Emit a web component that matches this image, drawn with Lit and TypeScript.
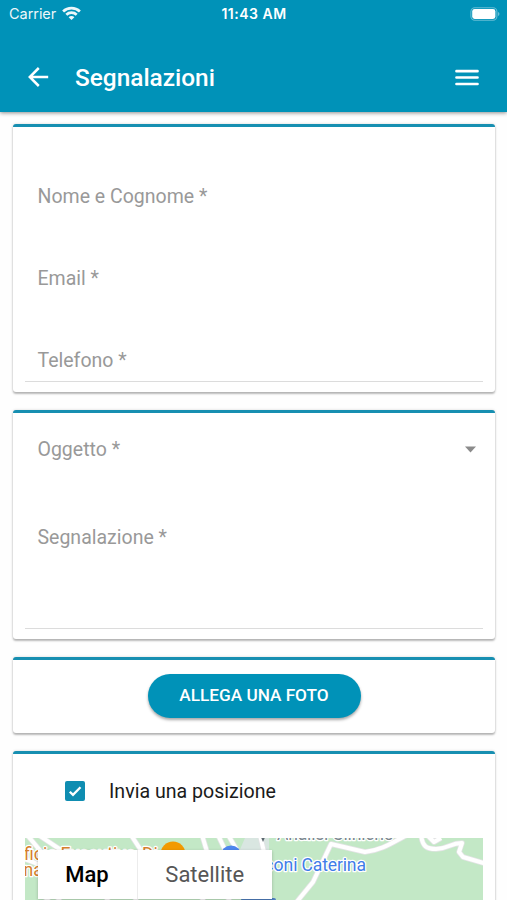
import { LitElement, html, css, svg } from "lit";
import { customElement } from "lit/decorators.js";

@customElement("status-bar")
class StatusBar extends LitElement {
  static styles = css`
    :host { display: grid; grid-template-columns: 1fr auto 1fr; align-items: center; height: 28px; padding: 0 7px 0 9px; color: #fff; font: 14.5px/28px Inter, sans-serif; }
    .carrier { display: flex; align-items: center; gap: 6px; opacity: 0.93; letter-spacing: -0.05px; }
    .carrier svg { position: relative; top: -1px; }
    .time { font-size: 14px; font-weight: 600; letter-spacing: 0.5px; padding-right: 1px; }
    .battery { justify-self: end; display: block; position: relative; top: -0.5px; }
  `;
  render() {
    return html`
      <div class="carrier">
        <span>Carrier</span>
        <svg width="19" height="15" viewBox="0 0 19 15" fill="none" stroke="#fff" stroke-width="2.7">
          <path d="M1.1 5.4C5.8.9 13.2.9 17.9 5.4" />
          <path d="M4.3 8.8C7.2 6 11.8 6 14.7 8.8" />
          <path d="M9.5 14L6.6 11.2C8.2 9.7 10.8 9.7 12.4 11.2Z" fill="#fff" stroke="none" />
        </svg>
      </div>
      <div class="time">11:43 AM</div>
      <svg class="battery" width="30" height="14" viewBox="0 0 30 14">
        <rect x=".9" y=".7" width="26" height="12.6" rx="4" fill="none" stroke="#fff" stroke-opacity=".4" stroke-width="1.1" />
        <rect x="2.2" y="2.1" width="23.2" height="9.8" rx="2.4" fill="#fff" />
        <path d="M28.2 5C29.8 5.6 29.8 8.4 28.2 9Z" fill="#fff" fill-opacity=".5" />
      </svg>
    `;
  }
}

const ROADS = [
  "M-2 -8L18 16M12 -4L42 16M106 -3L119 17M177 -3L183 17M192 -5L201 14M202 -5L213 14M235 -3L239 14M0 21L18 28",
  "M31 66L36 58M80 66L84 58M113 66L109 58M180 66L176 58M20 64L25 58M206 66L202 58",
  "M270 66L288 44L306 6L340 14C358 12 368 4 382 -3M396 -4C397 9 402 11 411 11C423 11 425 5 437 5L434 14L438 19L462 26M402 -3L409 4L416 0",
];

@customElement("area-map")
class AreaMap extends LitElement {
  static styles = css`
    :host { display: block; position: relative; height: 80px; overflow: hidden; }
    .canvas { display: block; }
    .label { font-family: Roboto, sans-serif; font-size: 17.6px; paint-order: stroke; stroke: #fff; stroke-width: 2.5px; stroke-linejoin: round; }
    .orange { fill: #d5802c; }
    .blue { fill: #3f7de8; }
    .grey { fill: #7b8790; }
    .end { text-anchor: end; }
    .switch { position: absolute; left: 12.5px; top: 12px; display: flex; height: 49px; width: 234.5px; background: #fff; box-shadow: 0 1px 3px rgba(0, 0, 0, 0.22); font: 22px/49px Roboto, sans-serif; }
    .option { flex: 1; text-align: center; color: #565656; }
    .active { flex: 0 0 99px; border-right: 1px solid #ececec; color: #000; font-weight: 500; }
  `;
  render() {
    return html`
      <svg class="canvas" width="458" height="80" viewBox="0 0 458 80">
        <rect width="458" height="80" fill="#c3e8c6" />
        <path d="M220 0H244V16H213Z" fill="#d9e6e1" />
        <g fill="none" stroke="#e4e3e6" stroke-width="5.5" stroke-linejoin="round">${ROADS.map((d) => svg`<path d=${d} />`)}</g>
        <g fill="none" stroke="#fff" stroke-width="4" stroke-linejoin="round">${ROADS.map((d) => svg`<path d=${d} />`)}</g>
        <text class="label orange" x="-1" y="21.5">ficio</text>
        <text class="label orange" x="35.5" y="21.5">Executive</text>
        <text class="label orange" x="117" y="21.5">Di</text>
        <text class="label orange" x="-1.5" y="38.2">nale</text>
        <circle cx="148" cy="16" r="12.5" fill="#f29900" />
        <circle cx="206" cy="18" r="10.5" fill="#4e86ee" />
        <rect x="216" y="60" width="35" height="12" rx="2" fill="#4f7fc0" />
        <path d="M235 -3H241L238 4Z" fill="#5d6970" />
        <text class="label grey" x="252" y="1.7" textLength="116">Analisi Cliniche</text>
        <text class="label blue end" x="272.5" y="33">Falconi</text>
        <text class="label blue end" x="341" y="33" textLength="64.5">Caterina</text>
      </svg>
      <div class="switch">
        <div class="option active">Map</div>
        <div class="option">Satellite</div>
      </div>
    `;
  }
}

@customElement("app-root")
class AppRoot extends LitElement {
  static styles = css`
    :host { display: block; height: 900px; overflow: hidden; background: #fefefe; font-family: Roboto, "Noto Sans", sans-serif; }
    .header { height: 111.5px; background: #0092b8; box-shadow: 0 1px 4px rgba(0, 0, 0, 0.45); }
    .toolbar { display: flex; align-items: center; height: 66px; margin-top: 16px; padding: 0 28px; color: #fff; }
    .toolbar svg { display: block; }
    .title { flex: 1; margin: 0 0 0 26px; padding-top: 2px; font-size: 24.4px; font-weight: 500; line-height: 66px; }
    .page { display: flex; flex-direction: column; gap: 18px; padding: 12.5px 12px 0 13px; }
    .card { box-sizing: border-box; border-top: 3px solid #178fb1; border-radius: 3px; background: #fff; padding: 0 12px; box-shadow: 0 2px 2px rgba(0, 0, 0, 0.25), 0 0 3px rgba(0, 0, 0, 0.16); }
    .contact { height: 268px; padding-top: 28px; }
    .report { height: 229px; }
    .attach { height: 76px; padding-top: 14px; display: flex; justify-content: center; align-items: flex-start; }
    .place { height: 200px; }
    .field { box-sizing: border-box; display: flex; justify-content: space-between; align-items: center; height: 82px; padding: 0 7px 0 12.5px; color: #999; font-size: 19.5px; }
    .contact .last { height: 63px; border-bottom: 1px solid #dcdcdc; padding-top: 20px; }
    .report .subject { height: 72px; }
    .report .message { height: 144px; align-items: flex-start; padding-top: 40px; line-height: 26px; border-bottom: 1px solid #dcdcdc; }
    .button { border: 0; padding: 0 0 2px; width: 213px; height: 44px; border-radius: 22px; background: #0092b8; color: #fff; font: 500 17.2px/42px Roboto, sans-serif; box-shadow: 0 2px 3px rgba(0, 0, 0, 0.35); }
    .check { display: flex; align-items: center; gap: 24px; height: 74px; padding: 0 0 0 40px; margin-bottom: 10px; color: #1b1b1b; font-size: 19.6px; }
    .check svg { display: block; }
  `;
  render() {
    return html`
      <header class="header">
        <status-bar></status-bar>
        <div class="toolbar">
          <svg width="21" height="20" viewBox="0 0 21 20" fill="none" stroke="#fff" stroke-width="2.5"><path d="M10.8 1L1.8 10L10.8 19M2 10H20.2" /></svg>
          <h1 class="title">Segnalazioni</h1>
          <svg width="24" height="17" viewBox="0 0 24 17" stroke="#fff" stroke-width="2.7" stroke-linecap="round"><path d="M1.5 2.2H22.5M1.5 8.5H22.5M1.5 15H22.5" /></svg>
        </div>
      </header>
      <main class="page">
        <section class="card contact">
          <div class="field">Nome e Cognome *</div>
          <div class="field">Email *</div>
          <div class="field last">Telefono *</div>
        </section>
        <section class="card report">
          <div class="field subject">Oggetto *
            <svg width="11" height="7" viewBox="0 0 11 7"><path d="M0 .5H11L5.5 6.5Z" fill="#8b8b8b" /></svg>
          </div>
          <div class="field message">Segnalazione *</div>
        </section>
        <section class="card attach"><button class="button">ALLEGA UNA FOTO</button></section>
        <section class="card place">
          <div class="check">
            <svg width="20" height="20" viewBox="0 0 20 20"><rect width="20" height="20" rx="2" fill="#0f8db1" /><path d="M4.8 10.7L8 13.9L15.5 6.2" fill="none" stroke="#fff" stroke-width="2.3" /></svg>
            <span>Invia una posizione</span>
          </div>
          <area-map></area-map>
        </section>
      </main>
    `;
  }
}
